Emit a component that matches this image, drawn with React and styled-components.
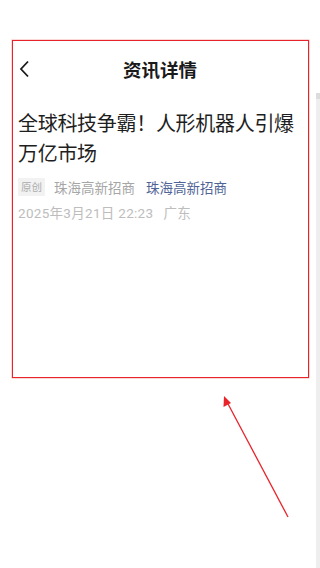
import React from "react";
import styled, { createGlobalStyle } from "styled-components";

const Global = createGlobalStyle`
  html, body { margin: 0; padding: 0; background: #fff; }
  body { font-family: "Noto Sans CJK SC", "Noto Sans", sans-serif; width: 320px; height: 568px; overflow: hidden; }
  * { box-sizing: border-box; }
`;

const Page = styled.div`
  position: relative;
  width: 320px;
  height: 568px;
  background: #fff;
  overflow: hidden;
`;

const Screen = styled.div`
  padding-top: 47px;
  display: flex;
  flex-direction: column;
`;

const Header = styled.header`
  height: 44px;
  display: grid;
  grid-template-columns: 1fr auto 1fr;
  align-items: center;
  padding: 0 18px;
  width: 320px;
`;

const Back = styled.div`
  display: flex;
  align-items: center;
`;

const Title = styled.h1`
  margin: 0;
  text-align: center;
  font-size: 18.5px;
  font-weight: 700;
  color: #1a1a1a;
`;

const Article = styled.article`
  padding: 0 18px;
`;

const Headline = styled.h2`
  margin: 17px 0 0;
  font-size: 20px;
  line-height: 30px;
  font-weight: 400;
  color: #1e1e1e;
  letter-spacing: -0.3px;
`;

const Meta = styled.div`
  margin-top: 10px;
  display: flex;
  align-items: center;
  gap: 9px;
  height: 18px;
`;

const Tag = styled.span`
  background: #f2f2f2;
  color: #acacac;
  font-size: 10.5px;
  line-height: 18px;
  padding: 0 3px;
  border-radius: 1px;
`;

const Source = styled.span`
  font-size: 13.5px;
  color: ${p => (p.$link ? "#4f6496" : "#a6a6a6")};
  margin-left: ${p => (p.$link ? "2px" : "0")};
`;

const DateRow = styled.div`
  margin-top: 7px;
  font-family: Roboto, "Noto Sans CJK SC", sans-serif;
  font-size: 13.5px;
  line-height: 20px;
  letter-spacing: 0.3px;
  color: #bdbdbd;
  display: flex;
  gap: 10px;
`;

const ScrollTrack = styled.div`
  position: absolute;
  right: 0;
  top: 93px;
  bottom: 0;
  width: 4px;
  background: #eeeeee;
  &::before {
    content: "";
    display: block;
    height: 6px;
    background: #dcdcdc;
  }
`;

const Annotation = styled.div`
  position: absolute;
  left: 12px;
  top: 40px;
  width: 297px;
  height: 338px;
  border: 1.5px solid #e8232a;
  box-shadow: 0 0 0 0.5px rgba(240, 100, 100, 0.5);
  pointer-events: none;
`;

const ArrowSvg = styled.svg`
  position: absolute;
  left: 0;
  top: 0;
  pointer-events: none;
`;

export default function App() {
  return (
    <Page>
      <Global />
      <Screen>
        <Header>
          <Back>
            <svg width="12" height="18" viewBox="0 0 12 18">
              <path d="M10 1.5 L3 9 L10 16.5" fill="none" stroke="#1a1a1a" strokeWidth="1.8" />
            </svg>
          </Back>
          <Title>资讯详情</Title>
          <span />
        </Header>
        <Article>
          <Headline>全球科技争霸！人形机器人引爆万亿市场</Headline>
          <Meta>
            <Tag>原创</Tag>
            <Source>珠海高新招商</Source>
            <Source $link>珠海高新招商</Source>
          </Meta>
          <DateRow>
            <span>2025年3月21日 22:23</span>
            <span>广东</span>
          </DateRow>
        </Article>
      </Screen>
      <ScrollTrack />
      <Annotation />
      <ArrowSvg width="320" height="568" viewBox="0 0 320 568">
        <line x1="288" y1="517" x2="227" y2="402" stroke="#e8232a" strokeWidth="1.3" />
        <polygon points="224,396 223.5,407 231,403" fill="#e8232a" />
      </ArrowSvg>
    </Page>
  );
}
